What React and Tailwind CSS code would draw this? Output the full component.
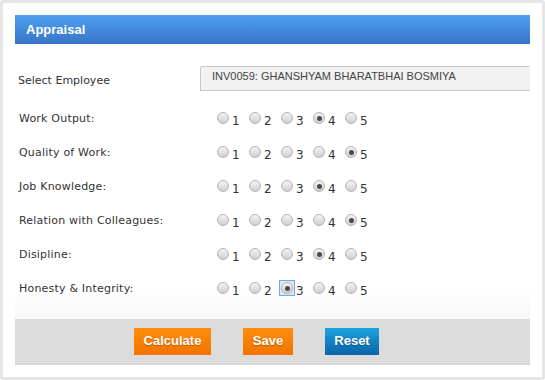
import { useState } from "react";

const criteria = [
  { id: "output", label: "Work Output:", value: 4 },
  { id: "quality", label: "Quality of Work:", value: 5 },
  { id: "knowledge", label: "Job Knowledge:", value: 4 },
  { id: "relation", label: "Relation with Colleagues:", value: 5 },
  { id: "discipline", label: "Disipline:", value: 4 },
  { id: "honesty", label: "Honesty & Integrity:", value: 3, focus: true },
];

function Radio({ checked, focused, onClick }) {
  return (
    <span
      onClick={onClick}
      className={`flex h-[14px] w-[14px] items-center justify-center ${
        focused ? "outline outline-1 outline-[#7aa7e0] bg-[#dbe8f8]" : ""
      }`}
    >
      <span className="flex h-[12px] w-[12px] items-center justify-center rounded-full border border-[#b4b4b4] bg-gradient-to-b from-[#f4f4f4] to-[#cfcfcf]">
        {checked && <span className="h-[5px] w-[5px] rounded-full bg-[#4a4a4a]" />}
      </span>
    </span>
  );
}

export default function App() {
  const [scores, setScores] = useState(
    Object.fromEntries(criteria.map((c) => [c.id, c.value]))
  );

  return (
    <div className="h-[380px] w-[545px] overflow-hidden bg-white">
      <div className="flex h-full flex-col rounded-[3px] border-[3px] border-[#e6e6e6] px-[12px] pt-[12px] font-['DejaVu_Sans',Verdana,sans-serif] text-[#333]">
        {/* Header */}
        <div className="flex h-[29px] items-center bg-gradient-to-b from-[#4fa1f2] to-[#3874c6] pl-[11px] font-['Liberation_Sans',Arial,sans-serif] text-[13px] font-bold text-white">
          Appraisal
        </div>

        {/* Employee */}
        <div className="mt-[22px] flex h-[25px] items-center">
          <div className="w-[185px] pl-[3px] pt-[5px] text-[11px]">Select Employee</div>
          <div className="flex h-[25px] flex-1 items-start rounded-tl-[3px] border border-r-0 border-[#c8c8c8] bg-[#f2f2f2] pl-[11px] pt-[1px] font-['Liberation_Sans',Arial,sans-serif] text-[11px] text-[#444]">
            INV0059: GHANSHYAM BHARATBHAI BOSMIYA
          </div>
        </div>

        {/* Ratings */}
        <div className="mt-[10px] flex flex-col bg-gradient-to-b from-white from-[85%] to-[#f7f7f7] pb-[14px]">
          {criteria.map((c) => (
            <div key={c.id} className="flex h-[34px] items-center">
              <div className="w-[201px] pl-[4px] pt-[2px] text-[11px] tracking-[0.2px]">{c.label}</div>
              <div className="flex items-center">
                {[1, 2, 3, 4, 5].map((n) => (
                  <div key={n} className="flex w-[32px] items-center">
                    <Radio
                      checked={scores[c.id] === n}
                      focused={c.focus && n === 3}
                      onClick={() => setScores({ ...scores, [c.id]: n })}
                    />
                    <span className="ml-[2px] mt-[5px] text-[12px] leading-none text-[#333]">{n}</span>
                  </div>
                ))}
              </div>
            </div>
          ))}
        </div>

        {/* Footer */}
        <div className="flex h-[46px] items-center gap-[32px] border-b-2 border-[#d8d8d8] bg-[#dcdcdc] pl-[119px] font-['Liberation_Sans',Arial,sans-serif] text-[13px] font-bold text-white">
          <button className="h-[27px] w-[77px] bg-gradient-to-b from-[#ff8d0c] to-[#f27300] [text-shadow:0_1px_1px_rgba(0,0,0,0.25)]">
            Calculate
          </button>
          <button className="h-[27px] w-[50px] bg-gradient-to-b from-[#ff8d0c] to-[#f27300] [text-shadow:0_1px_1px_rgba(0,0,0,0.25)]">
            Save
          </button>
          <button className="h-[27px] w-[54px] bg-gradient-to-b from-[#1ea3e0] to-[#0a63a8] [text-shadow:0_1px_1px_rgba(0,0,0,0.3)]">
            Reset
          </button>
        </div>
      </div>
    </div>
  );
}
